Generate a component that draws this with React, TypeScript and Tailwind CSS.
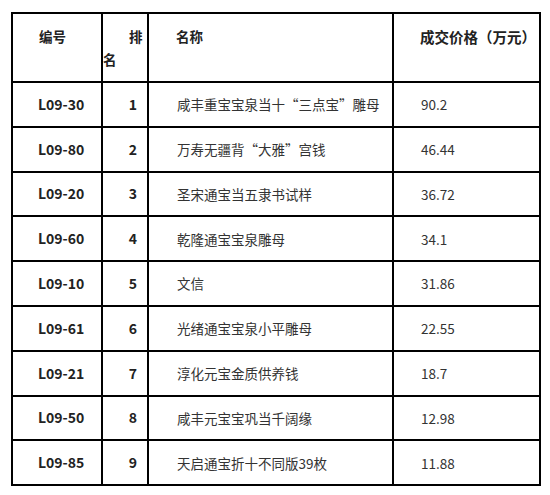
import React from 'react';

interface Lot {
  code: string;
  rank: number;
  name: string;
  price: string;
}

const lots: Lot[] = [
  { code: 'L09-30', rank: 1, name: '咸丰重宝宝泉当十“三点宝”雕母', price: '90.2' },
  { code: 'L09-80', rank: 2, name: '万寿无疆背“大雅”宫钱', price: '46.44' },
  { code: 'L09-20', rank: 3, name: '圣宋通宝当五隶书试样', price: '36.72' },
  { code: 'L09-60', rank: 4, name: '乾隆通宝宝泉雕母', price: '34.1' },
  { code: 'L09-10', rank: 5, name: '文信', price: '31.86' },
  { code: 'L09-61', rank: 6, name: '光绪通宝宝泉小平雕母', price: '22.55' },
  { code: 'L09-21', rank: 7, name: '淳化元宝金质供养钱', price: '18.7' },
  { code: 'L09-50', rank: 8, name: '咸丰元宝宝巩当千阔缘', price: '12.98' },
  { code: 'L09-85', rank: 9, name: '天启通宝折十不同版39枚', price: '11.88' },
];

const font = { fontFamily: '"Noto Sans CJK SC", "Noto Sans", sans-serif' };

const App: React.FC = () => {
  return (
    <div className="w-[550px] h-[495px] bg-white pl-[11px] pt-[12px]" style={font}>
      <table className="table-fixed border-collapse w-[528px] border-2 border-[#4a4a4a] text-[#333]">
        <colgroup>
          <col className="w-[90px]" />
          <col className="w-[46px]" />
          <col className="w-[245px]" />
          <col className="w-[147px]" />
        </colgroup>
        <thead>
          <tr className="h-[69px] align-top text-[13.5px] font-bold text-[#222] leading-[23px]">
            <th className="border-2 border-black text-left font-bold pl-[26px] pt-[11px]">编号</th>
            <th className="border-2 border-black text-left font-bold p-0 pt-[11px] indent-[26px]">排名</th>
            <th className="border-2 border-black text-left font-bold pl-[27px] pt-[11px]">名称</th>
            <th className="border-2 border-black text-left font-bold pl-[26px] pt-[11px] whitespace-nowrap text-[14.5px]">成交价格（万元）</th>
          </tr>
        </thead>
        <tbody>
          {lots.map((lot) => (
            <tr key={lot.code} className="h-[44.8px] text-[13.5px]">
              <td className="border-2 border-black pl-[25px] font-bold text-[#222] text-[14px]">{lot.code}</td>
              <td className="border-2 border-black text-right pr-[10px] font-bold text-[#222] text-[14px]">{lot.rank}</td>
              <td className="border-2 border-black pl-[28px] whitespace-nowrap">{lot.name}</td>
              <td className="border-2 border-black pl-[27px]">{lot.price}</td>
            </tr>
          ))}
        </tbody>
      </table>
    </div>
  );
};

export default App;
